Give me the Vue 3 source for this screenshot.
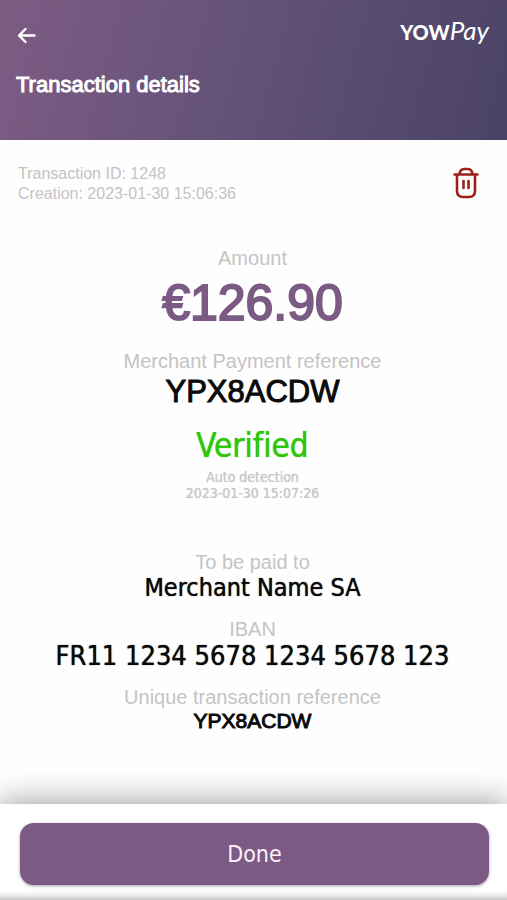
<script setup>
const transaction = {
  id: '1248',
  created: '2023-01-30 15:06:36',
  amount: '€126.90',
  reference: 'YPX8ACDW',
  status: 'Verified',
  detection: 'Auto detection',
  detectedAt: '2023-01-30 15:07:26',
  merchant: 'Merchant Name SA',
  iban: 'FR11 1234 5678 1234 5678 123',
}
</script>

<template>
  <div class="page">
    <header class="header">
      <div class="topbar">
        <a class="back" href="#" aria-label="Back">
          <svg width="20" height="18" viewBox="0 0 20 18" fill="none" stroke="currentColor" stroke-width="2.4" stroke-linecap="round" stroke-linejoin="round">
            <path d="M18.500 8.500H3.500M9.500 2L3 8.500l6.500 6.500" />
          </svg>
        </a>
        <a class="logo" href="#"><span class="logo-yow">YOW</span><span class="logo-pay">Pay</span></a>
      </div>
      <h1 class="title">Transaction details</h1>
    </header>

    <main class="content">
      <div class="meta">
        <p class="meta-text">
          Transaction ID: {{ transaction.id }}<br />
          Creation: {{ transaction.created }}
        </p>
        <button class="delete" type="button" aria-label="Delete transaction">
          <svg width="26" height="32" viewBox="0 0 26 32" fill="none" stroke="currentColor" stroke-width="2.6" stroke-linecap="round" stroke-linejoin="round">
            <path d="M1.500 7.500h23M6.500 7C7 3.500 9 2 11 2h4c2 0 4 1.500 4.500 5" />
            <path d="M4 8v16q0 6 6 6h6q6 0 6-6V8M10.500 14v7M15.500 14v7" />
          </svg>
        </button>
      </div>

      <section class="group">
        <p class="label">Amount</p>
        <p class="amount">{{ transaction.amount }}</p>
      </section>
      <section class="group">
        <p class="label">Merchant Payment reference</p>
        <p class="reference">{{ transaction.reference }}</p>
      </section>
      <section class="group">
        <p class="status">{{ transaction.status }}</p>
        <p class="note">{{ transaction.detection }}<br />{{ transaction.detectedAt }}</p>
      </section>
      <div class="payee">
        <section>
          <p class="label">To be paid to</p>
          <p class="merchant">{{ transaction.merchant }}</p>
        </section>
        <section>
          <p class="label">IBAN</p>
          <p class="iban">{{ transaction.iban }}</p>
        </section>
        <section>
          <p class="label">Unique transaction reference</p>
          <p class="unique">{{ transaction.reference }}</p>
        </section>
      </div>
    </main>

    <footer class="footer">
      <button class="done" type="button">Done</button>
    </footer>
  </div>
</template>

<style>
body {
  margin: 0;
  background: #fefefe;
}
</style>

<style scoped>
.page {
  display: flex;
  flex-direction: column;
  min-height: 100vh;
  overflow: hidden;
  font-family: "Liberation Sans", Arial, sans-serif;
  color: #0a0a0a;
}
p,
h1 {
  margin: 0;
}
.header {
  box-sizing: border-box;
  height: 140px;
  padding: 16px;
  background: linear-gradient(105deg, #7e5c84 0%, #5f5075 55%, #4a4366 100%);
  color: #fff;
}
.topbar {
  display: flex;
  justify-content: space-between;
  align-items: flex-start;
  height: 40px;
}
.back {
  display: flex;
  align-self: center;
  color: inherit;
}
.logo {
  display: flex;
  align-items: baseline;
  padding-right: 2px;
  color: inherit;
  text-decoration: none;
}
.logo-yow {
  font: 900 20px/28px Lato, sans-serif;
}
.logo-pay {
  font: italic 26px/28px Lato, cursive;
}
.title {
  margin-top: 16px;
  font-size: 22px;
  font-weight: 400;
  line-height: 26px;
  -webkit-text-stroke: 1px currentColor;
}
.content {
  flex: 1;
  padding: 24px 0;
}
.meta {
  display: flex;
  justify-content: space-between;
  align-items: flex-start;
  padding: 0 28px 0 18px;
  margin-bottom: 42px;
}
.meta-text {
  font-size: 16px;
  line-height: 20px;
  color: #c4c4c4;
}
.delete {
  display: flex;
  margin-top: 3px;
  padding: 0;
  border: 0;
  background: none;
  color: #9c2119;
}
.group,
.payee {
  padding-right: 2px;
  margin-bottom: 12px;
  text-align: center;
}
.payee {
  display: grid;
  gap: 15px;
  margin-top: 49px;
}
.label {
  font-size: 20px;
  line-height: 24px;
  color: #c4c4c4;
}
.amount {
  font-size: 50px;
  line-height: 67px;
  color: #7b5b83;
  -webkit-text-stroke: 2px currentColor;
}
.reference {
  font-size: 31px;
  line-height: 38px;
  -webkit-text-stroke: 1px currentColor;
}
.status,
.note,
.merchant,
.iban,
.done {
  font-family: "DejaVu Sans Condensed", "DejaVu Sans", sans-serif;
}
.status,
.note,
.merchant,
.iban {
  text-shadow: 0 0 1px currentColor;
}
.status {
  font-size: 33px;
  line-height: 46px;
  font-variant-ligatures: none;
  color: #2fc60a;
}
.note {
  font-size: 14px;
  line-height: 16px;
  color: #c8c8c8;
}
.merchant {
  font-size: 25px;
  line-height: 28px;
}
.iban {
  font-size: 27px;
  line-height: 29px;
}
.unique {
  font-size: 21px;
  line-height: 24px;
  -webkit-text-stroke: 1px currentColor;
}
.footer {
  padding: 19px 18px 15px 20px;
  background: #fff;
  box-shadow: 0 0 30px 2px rgba(0, 0, 0, 0.38), inset 0 -10px 8px -8px rgba(0, 0, 0, 0.3);
}
.done {
  display: block;
  width: 100%;
  height: 62px;
  border: 0;
  border-radius: 14px;
  background: #7b5b83;
  box-shadow: 0 1px 3px rgba(80, 50, 90, 0.5);
  color: #fff0fc;
  font-size: 23px;
}
</style>
